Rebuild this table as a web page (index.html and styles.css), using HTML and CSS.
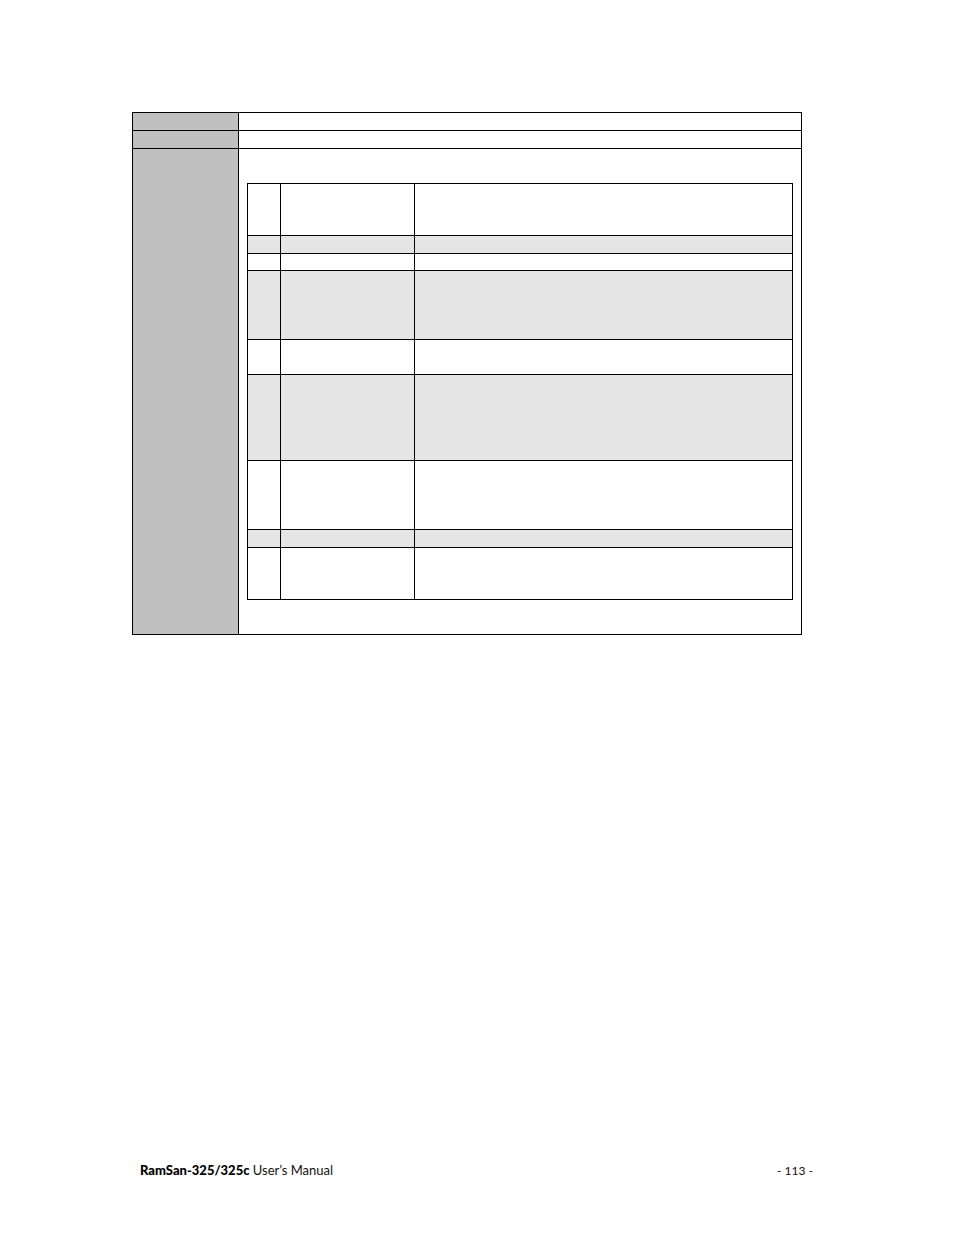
FILE: index.html
```html
<!DOCTYPE html>
<html>
<head>
<meta charset="utf-8">
<link rel="stylesheet" href="styles.css">
</head>
<body>
<div class="page">
  <div class="sheet">
    <div class="cell label"></div>
    <div class="cell value r18"></div>
    <div class="cell label"></div>
    <div class="cell value r18"></div>
    <div class="cell label"></div>
    <div class="cell value body">
      <div class="inner">
        <div class="ic c1 h52"></div><div class="ic c2 h52"></div><div class="ic c3 h52"></div>
        <div class="ic c1 h18 g"></div><div class="ic c2 h18 g"></div><div class="ic c3 h18 g"></div>
        <div class="ic c1 h17"></div><div class="ic c2 h17"></div><div class="ic c3 h17"></div>
        <div class="ic c1 h69 g"></div><div class="ic c2 h69 g"></div><div class="ic c3 h69 g"></div>
        <div class="ic c1 h35"></div><div class="ic c2 h35"></div><div class="ic c3 h35"></div>
        <div class="ic c1 h86 g"></div><div class="ic c2 h86 g"></div><div class="ic c3 h86 g"></div>
        <div class="ic c1 h69"></div><div class="ic c2 h69"></div><div class="ic c3 h69"></div>
        <div class="ic c1 h18 g"></div><div class="ic c2 h18 g"></div><div class="ic c3 h18 g"></div>
        <div class="ic c1 h52"></div><div class="ic c2 h52"></div><div class="ic c3 h52"></div>
      </div>
    </div>
  </div>
  <div class="footer">
    <span class="title"><b>RamSan-325/325c</b> User’s Manual</span>
    <span class="pageno">- 113 -</span>
  </div>
</div>
</body>
</html>
```
FILE: styles.css
```css
* { box-sizing: border-box; }
html, body { margin: 0; padding: 0; background: #fff; }
.page {
  width: 954px;
  height: 1235px;
  padding-top: 112px;
  font-family: Lato, "Liberation Sans", sans-serif;
  color: #000;
}
.sheet {
  margin-left: 132px;
  width: 670px;
  display: grid;
  grid-template-columns: 106px 563px;
  grid-template-rows: 18px 18px 486px;
  border-left: 1px solid #000;
  border-top: 1px solid #000;
}
.cell {
  border-right: 1px solid #000;
  border-bottom: 1px solid #000;
}
.label { background: #c0c0c0; }
.body {
  padding-left: 8px;
  padding-top: 34px;
}
.inner {
  display: grid;
  grid-template-columns: 33px 134px 378px;
  width: 546px;
  border-left: 1px solid #000;
  border-top: 1px solid #000;
}
.ic {
  border-right: 1px solid #000;
  border-bottom: 1px solid #000;
}
.g { background: #e5e5e5; }
.h52 { height: 52px; }
.h18 { height: 18px; }
.h17 { height: 17px; }
.h69 { height: 69px; }
.h35 { height: 35px; }
.h86 { height: 86px; }
.footer {
  margin-top: 527px;
  margin-left: 140px;
  width: 673px;
  display: flex;
  justify-content: space-between;
  align-items: baseline;
  font-size: 13px;
  line-height: 17px;
  color: #111;
}
.title { font-weight: 400; }
.title b { font-weight: 900; color: #000; }
.pageno { font-size: 12px; font-weight: 400; }
```
